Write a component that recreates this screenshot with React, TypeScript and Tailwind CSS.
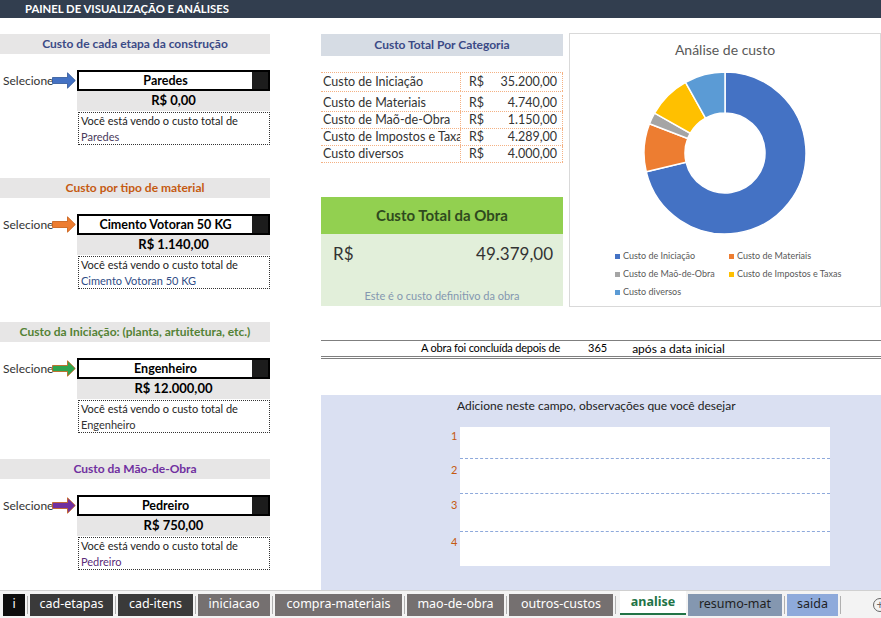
import React from "react";

const FONT = "font-['Lato','Liberation_Sans',sans-serif]";

type Sec = {
  title: string;
  titleColor: string;
  arrow: string;
  arrowEdge: string;
  item: string;
  value: string;
  noteColor: string;
  mt: string;
};

const sections: Sec[] = [
  { title: "Custo de cada etapa da construção", titleColor: "text-[#3b4a86]", arrow: "#4472c4", arrowEdge: "#2f5597", item: "Paredes", value: "R$ 0,00", noteColor: "text-[#4a3b5c]", mt: "mt-[16px]" },
  { title: "Custo por tipo de material", titleColor: "text-[#c55a11]", arrow: "#ed7d31", arrowEdge: "#c55a11", item: "Cimento Votoran 50 KG", value: "R$ 1.140,00", noteColor: "text-[#2f4c86]", mt: "mt-[33px]" },
  { title: "Custo da Iniciação: (planta, artuitetura, etc.)", titleColor: "text-[#548235]", arrow: "#2ea44f", arrowEdge: "#c55a11", item: "Engenheiro", value: "R$ 12.000,00", noteColor: "text-[#333333]", mt: "mt-[33px]" },
  { title: "Custo da Mão-de-Obra", titleColor: "text-[#7030a0]", arrow: "#7030a0", arrowEdge: "#c55a11", item: "Pedreiro", value: "R$ 750,00", noteColor: "text-[#5b2d7a]", mt: "mt-[26px]" },
];

function Arrow({ fill, edge }: { fill: string; edge: string }) {
  return (
    <svg width="24" height="17" viewBox="0 0 24 17" className="absolute left-[52px] top-[2px]">
      <path d="M0.5 5.5 H15.5 V0.8 L23.3 8.5 L15.5 16.2 V11.5 H0.5 Z" fill={fill} stroke={edge} strokeWidth="0.8" />
    </svg>
  );
}

function Section({ s }: { s: Sec }) {
  return (
    <div className={s.mt}>
      <div className={`h-[20px] bg-[#e7e6e6] flex items-center justify-center text-[12px] font-bold ${s.titleColor}`}>
        {s.title}
      </div>
      <div className="relative mt-[16px] flex h-[21px]">
        <span className="absolute left-[3px] top-[2px] text-[12px] text-[#333]">Selecione</span>
        <Arrow fill={s.arrow} edge={s.arrowEdge} />
        <div className="ml-[77px] flex flex-1 border-2 border-black">
          <div className="flex flex-1 items-center justify-center pt-[1px] text-[12.5px] font-bold text-black">{s.item}</div>
          <div className="w-[16px] bg-[#1c1c1c]" />
        </div>
      </div>
      <div className="ml-[77px] flex h-[20px] items-center justify-center bg-[#e7e6e6] text-[13px] font-bold text-black">
        {s.value}
      </div>
      <div className="ml-[78px] mt-[1px] h-[33px] border border-dotted border-[#333] pl-[2px] text-[11px] leading-[16px] text-[#222]">
        <div>Você está vendo o custo total de</div>
        <div className={s.noteColor}>{s.item}</div>
      </div>
    </div>
  );
}

const rows = [
  { label: "Custo de Iniciação", v: "35.200,00" },
  { label: "Custo de Materiais", v: "4.740,00" },
  { label: "Custo de Maõ-de-Obra", v: "1.150,00" },
  { label: "Custo de Impostos e Taxas", v: "4.289,00" },
  { label: "Custo diversos", v: "4.000,00" },
];

const slices = [
  { name: "Custo de Iniciação", v: 35200, c: "#4472c4" },
  { name: "Custo de Materiais", v: 4740, c: "#ed7d31" },
  { name: "Custo de Maõ-de-Obra", v: 1150, c: "#a5a5a5" },
  { name: "Custo de Impostos e Taxas", v: 4289, c: "#ffc000" },
  { name: "Custo diversos", v: 4000, c: "#5b9bd5" },
];

function Donut() {
  const total = slices.reduce((a, b) => a + b.v, 0);
  const cx = 82, cy = 82, R = 81, r = 40;
  let acc = 0;
  const pt = (rad: number, a: number) => [cx + rad * Math.sin(a), cy - rad * Math.cos(a)];
  return (
    <svg width="164" height="164" viewBox="0 0 164 164">
      {slices.map((s) => {
        const a0 = (acc / total) * Math.PI * 2;
        acc += s.v;
        const a1 = (acc / total) * Math.PI * 2;
        const large = a1 - a0 > Math.PI ? 1 : 0;
        const [x0, y0] = pt(R, a0);
        const [x1, y1] = pt(R, a1);
        const [x2, y2] = pt(r, a1);
        const [x3, y3] = pt(r, a0);
        const d = `M${x0} ${y0} A${R} ${R} 0 ${large} 1 ${x1} ${y1} L${x2} ${y2} A${r} ${r} 0 ${large} 0 ${x3} ${y3} Z`;
        return <path key={s.name} d={d} fill={s.c} stroke="#fff" strokeWidth="1.5" />;
      })}
    </svg>
  );
}

const tabs = [
  { t: "i", w: "w-[22px]", cls: "bg-[#0d0d0d] text-white" },
  { t: "cad-etapas", w: "w-[83px]", cls: "bg-[#3a3a3a] text-white" },
  { t: "cad-itens", w: "w-[75px]", cls: "bg-[#3a3a3a] text-white" },
  { t: "iniciacao", w: "w-[72px]", cls: "bg-[#757070] text-white" },
  { t: "compra-materiais", w: "w-[127px]", cls: "bg-[#757070] text-white" },
  { t: "mao-de-obra", w: "w-[97px]", cls: "bg-[#757070] text-white" },
  { t: "outros-custos", w: "w-[104px]", cls: "bg-[#757070] text-white" },
  { t: "analise", w: "w-[66px]", cls: "active" },
  { t: "resumo-mat", w: "w-[94px]", cls: "bg-[#8497b0] text-[#1f1f1f]" },
  { t: "saida", w: "w-[51px]", cls: "bg-[#8eaadb] text-[#1f1f1f]" },
];

export default function App() {
  return (
    <div className={`flex h-[618px] w-[881px] flex-col overflow-hidden bg-white ${FONT}`}>
      <div className="flex h-[18px] items-center bg-[#323e4f] pl-[25px] text-[11.3px] font-bold text-white">
        PAINEL DE VISUALIZAÇÃO E ANÁLISES
      </div>

      <div className="flex flex-1">
        {/* left column */}
        <div className="w-[270px]">
          {sections.map((s) => (
            <Section key={s.title} s={s} />
          ))}
        </div>

        {/* right area */}
        <div className="ml-[51px] flex flex-1 flex-col">
          <div className="flex">
            <div className="w-[242px]">
              <div className="mt-[16px] flex h-[22px] items-center justify-center bg-[#d6dce4] text-[12px] font-bold text-[#3b4a86]">
                Custo Total Por Categoria
              </div>
              <div className="mt-[16px] border-t border-dotted border-[#f4b183] text-[12.5px] text-[#333]">
                {rows.map((row, i) => (
                  <div
                    key={row.label}
                    className={`flex border-b border-dotted border-[#f4b183] ${i === 0 ? "mb-[3px] h-[19px] items-center" : "h-[17px] items-center"}`}
                  >
                    <div className="w-[139px] overflow-hidden whitespace-nowrap pl-[2px]">{row.label}</div>
                    <div className="flex h-full flex-1 items-center justify-between border-l border-r border-dotted border-[#f4b183] pl-[8px] pr-[5px]">
                      <span>R$</span>
                      <span>{row.v}</span>
                    </div>
                  </div>
                ))}
              </div>

              <div className="mt-[34px]">
                <div className="flex h-[37px] items-center justify-center bg-[#92d050] text-[15px] font-bold text-[#2f4a1e]">
                  Custo Total da Obra
                </div>
                <div className="flex h-[72px] flex-col bg-[#e2efda] px-[10px]">
                  <div className="mt-[7px] flex justify-between pl-[2px] text-[17px] text-[#333]">
                    <span>R$</span>
                    <span>49.379,00</span>
                  </div>
                  <div className="mt-auto mb-[2px] text-center text-[11px] text-[#8497b0]">
                    Este é o custo definitivo da obra
                  </div>
                </div>
              </div>
            </div>

            <div className="ml-[6px] mt-[15px] flex h-[274px] w-[312px] flex-col items-center border border-[#d9d9d9]">
              <div className="mt-[5px] text-[14px] text-[#595959]">Análise de custo</div>
              <div className="mt-[11px]">
                <Donut />
              </div>
              <div className="mt-[14px] grid w-full grid-cols-[114px_auto] gap-y-[4px] pl-[45px] text-[9px] text-[#595959]">
                {slices.map((s) => (
                  <div key={s.name} className="flex h-[14px] items-center whitespace-nowrap">
                    <span className="mr-[3px] h-[5px] w-[5px]" style={{ backgroundColor: s.c }} />
                    {s.name}
                  </div>
                ))}
              </div>
            </div>
          </div>

          <div className="mt-[33px] flex h-[19px] items-center border-t border-[#7f7f7f] border-b-[3px] border-b-[#7f7f7f] border-double text-black">
            <span className="ml-[100px] text-[11px] tracking-[-0.2px]">A obra foi concluída depois de</span>
            <span className="ml-[28px] text-[11px]">365</span>
            <span className="ml-[25px] text-[12px]">após a data inicial</span>
          </div>

          <div className="mt-[36px] flex flex-1 flex-col bg-[#dae0f2]">
            <div className="mt-[2px] ml-[136px] text-[12px] text-[#222]">
              Adicione neste campo, observações que você desejar
            </div>
            <div className="ml-[130px] mt-[12px] flex">
              <div className="flex w-[8px] flex-col text-[11px] text-[#c55a11]">
                <div className="h-[33px] pt-[1px]">1</div>
                <div className="h-[35px] pt-[2px]">2</div>
                <div className="h-[37px] pt-[2px]">3</div>
                <div className="h-[34px] pt-[2px]">4</div>
              </div>
              <div className="ml-[1px] w-[370px] bg-white">
                <div className="h-[32px] border-b border-dashed border-[#8ea9db]" />
                <div className="h-[35px] border-b border-dashed border-[#8ea9db]" />
                <div className="h-[38px] border-b border-dashed border-[#8ea9db]" />
                <div className="h-[34px]" />
              </div>
            </div>
          </div>
        </div>
      </div>

      <div className="flex h-[28px] items-center border-t border-[#d0d0d0] bg-[#f3f3f3] pl-[3px] text-[12.5px] font-['Noto_Sans','Liberation_Sans',sans-serif]">
        {tabs.map((tb) =>
          tb.cls === "active" ? (
            <div key={tb.t} className={`flex h-[24px] ${tb.w} mx-[2px] items-center justify-center self-start border-b-2 border-[#217346] bg-white font-bold text-[#217346]`}>
              {tb.t}
            </div>
          ) : (
            <div key={tb.t} className="flex items-center">
              <div className={`flex h-[22px] ${tb.w} items-center justify-center ${tb.cls}`}>{tb.t}</div>
              <div className="mx-[2px] h-[18px] w-px bg-[#b0b0b0]" />
            </div>
          )
        )}
        <div className="ml-auto mr-[-6px] flex h-[14px] w-[14px] items-center justify-center rounded-full border border-[#666] text-[12px] leading-none text-[#666]">
          +
        </div>
      </div>
    </div>
  );
}
